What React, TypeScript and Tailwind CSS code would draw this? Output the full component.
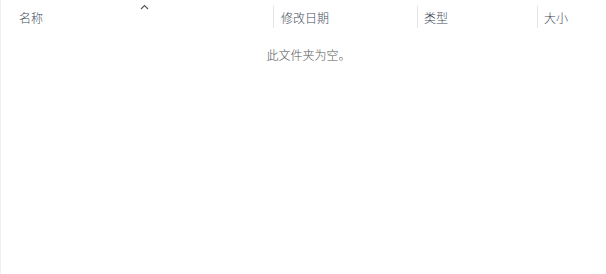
import React from "react";

export default function App() {
  const font = { fontFamily: '"Noto Sans CJK SC", "Noto Sans", sans-serif' };
  return (
    <div className="w-[606px] h-[274px] bg-white border-l border-[#f0f0f0] relative overflow-hidden font-light" style={font}>
      <div className="flex h-[34px] items-stretch text-[12px] text-[#3f4d5e]">
        <div className="w-[272px] relative flex items-center pl-[18px] pt-[2px]">
          <span>名称</span>
          <svg className="absolute left-[139px] top-[4px]" width="9" height="6" viewBox="0 0 9 6">
            <path d="M1 5 L4.5 1.5 L8 5" fill="none" stroke="#555" strokeWidth="1.1" />
          </svg>
        </div>
        <div className="w-[144px] flex items-center py-[6px]">
          <div className="w-px self-stretch bg-[#e5e5e5]" />
          <span className="pl-[7px] pt-[2px]">修改日期</span>
        </div>
        <div className="w-[120px] flex items-center py-[6px]">
          <div className="w-px self-stretch bg-[#e5e5e5]" />
          <span className="pl-[6px] pt-[2px]">类型</span>
        </div>
        <div className="flex-1 flex items-center py-[6px]">
          <div className="w-px self-stretch bg-[#e5e5e5]" />
          <span className="pl-[6px] pt-[2px]">大小</span>
        </div>
      </div>
      <div className="flex justify-center pl-[10px] pt-[12px] text-[12px] text-[#555]">
        此文件夹为空。
      </div>
    </div>
  );
}
